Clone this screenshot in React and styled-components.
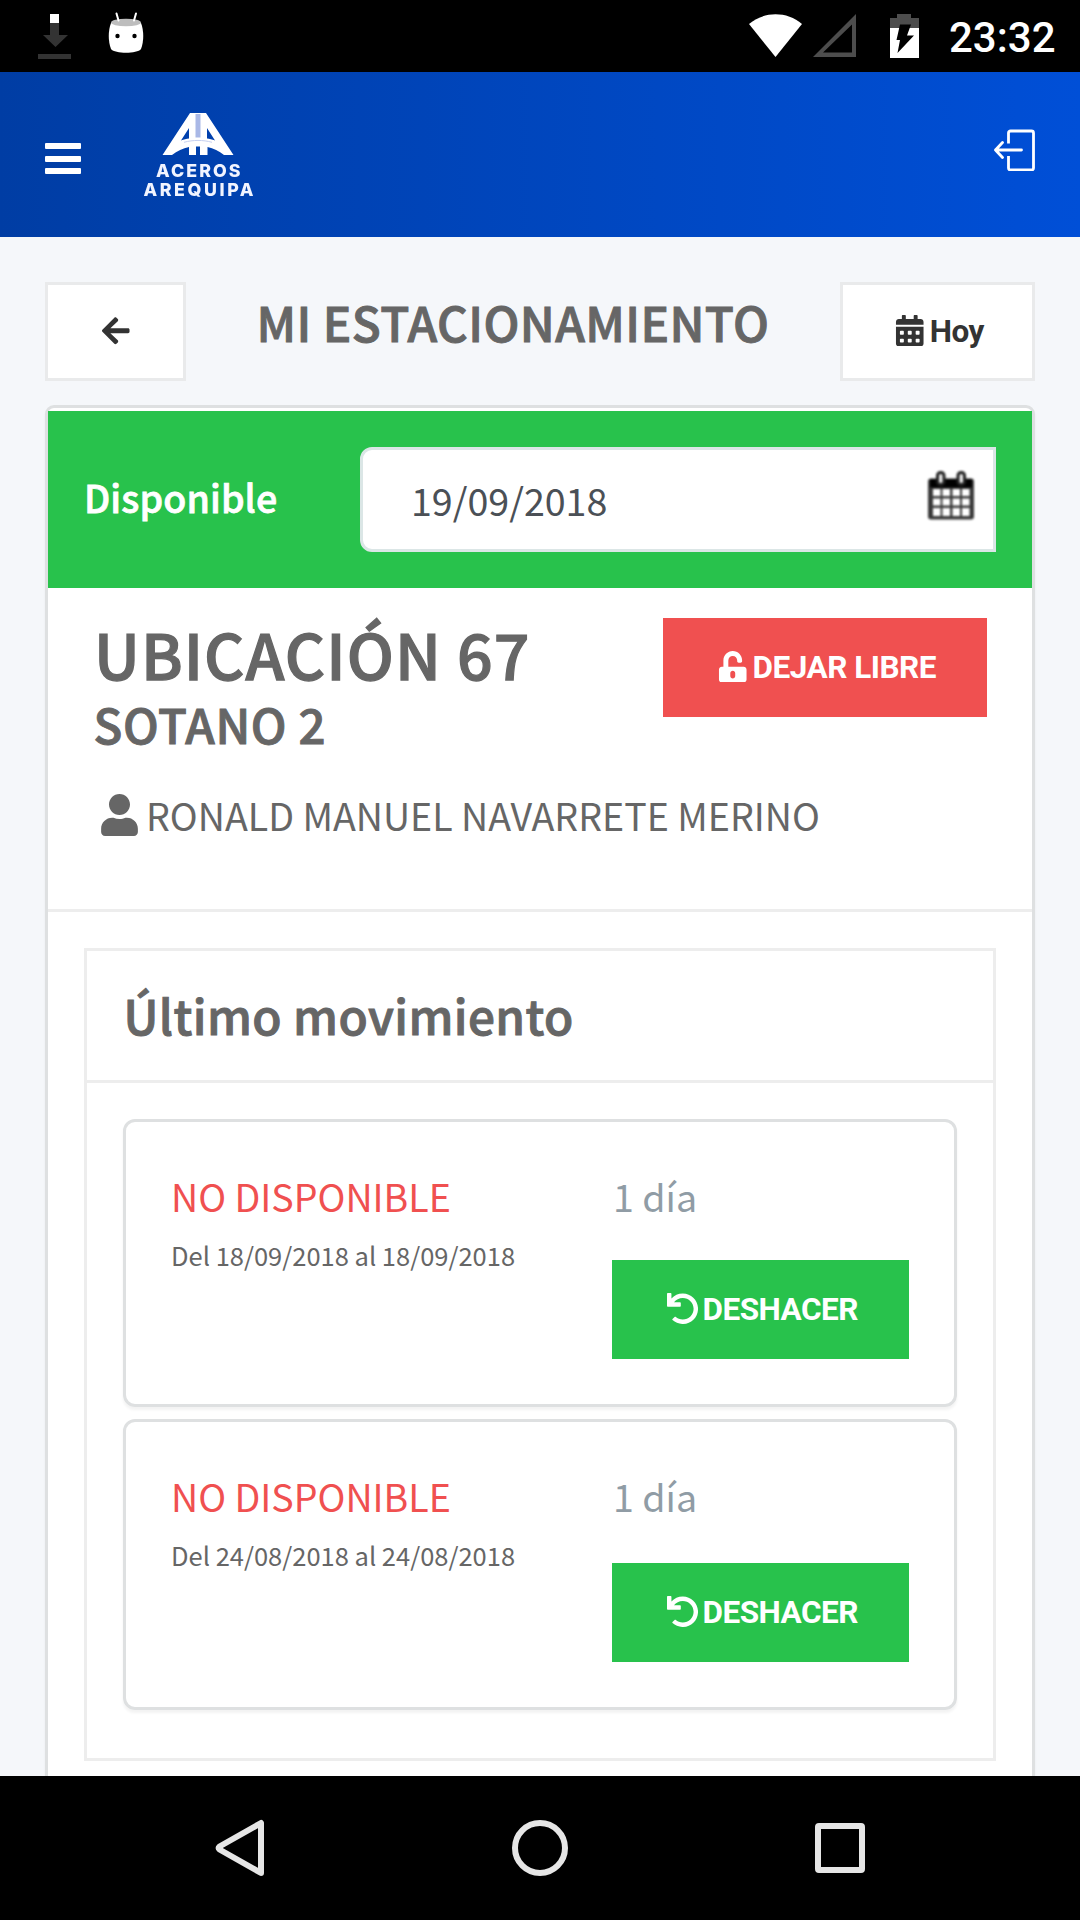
import React from 'react'
import styled, { createGlobalStyle } from 'styled-components';
import { FaArrowLeft, FaCalendarAlt, FaUnlockAlt, FaUndo, FaUser } from 'react-icons/fa';

const movements = [
    { id: 1, status: 'NO DISPONIBLE', range: 'Del 18/09/2018 al 18/09/2018', days: '1 día', gap: 33 },
    { id: 2, status: 'NO DISPONIBLE', range: 'Del 24/08/2018 al 24/08/2018', days: '1 día', gap: 36 },
]

const GlobalStyle = createGlobalStyle`
    *{
        margin: 0;
        padding: 0;
        box-sizing: border-box;
    }
    :root{
        --text-color: #666666;
        --green-color: #28c24c;
        --red-color: #f05050;
        --line-color: #ededed;
        --card-border: #dee0e1;
    }
    body{
        background: #f5f7fa;
        color: var(--text-color);
        font-family: 'Noto Sans CJK SC', 'Noto Sans', sans-serif;
        overflow: hidden;
    }
    /* semibold look, the font only goes from medium to bold */
    h1, h2, h3, strong{
        font-weight: 500;
        -webkit-text-stroke: .02em currentColor;
    }
    svg{
        display: block;
        flex-shrink: 0;
    }
`;

const StatusBar = () => {
    return (
        <StatusBarStyled>
            <svg width="150" height="72" viewBox="0 0 150 72">
                <path d="M50 23h9v12h9L55.500 47 43 35h7z" fill="#333" />
                <path d="M38 54h33v5H38z" fill="#333" />
                <path d="M50 14h9v9h-9z" fill="#fff" />
                <path d="M111 23c-3 8-3 18 0 26 4 5 26 5 30 0 3-8 3-18 0-26z" fill="#fff" />
                <ellipse cx="126" cy="22.500" rx="15" ry="3.800" fill="#bdbdbd" />
                <path d="M116.500 13.500l2 7M136 13.500l-2 7" stroke="#fff" strokeWidth="2" strokeLinecap="round" />
                <circle cx="117.500" cy="36" r="2.200" fill="#000" />
                <circle cx="134.500" cy="36" r="2.200" fill="#000" />
            </svg>
            <div className="system">
                <svg width="180" height="72" viewBox="745 0 180 72">
                    <path d="M749 24C764 11 787 11 802 24L775.500 57z" fill="#fff" />
                    <path d="M856 14v43h-43zM852 24.500L823 52.500h29z" fill="#4d4d4d" fillRule="evenodd" />
                    <path d="M890 18h7v-4h14v4h8v10h-29z" fill="#4d4d4d" />
                    <path d="M890 28h29v30h-29z" fill="#fff" />
                    <path d="M900 24.500h11l-4 11h7L897.500 53l2.500-13h-3.500z" fill="#000" />
                </svg>
                <span>23:32</span>
            </div>
        </StatusBarStyled>
    )
}

const Logo = () => {
    return (
        <LogoStyled width="120" height="100" viewBox="0 0 120 100">
            <path
                fillRule="evenodd"
                fill="#fff"
                d="M52 7h16l27.500 42H86c-5-4-10.500-6.500-16.500-8v8H62v-8.500h-4V49h-7v-8c-6 1.500-12 4-17 8h-9.500zM43 34.500c3-1.200 5.500-1.700 8-2V22zM69 22v10.500c2.500.3 5 .8 8 2z"
            />
            <path d="M57.500 8h5v23.500h-5z" fill="#a9b8e6" />
            <path d="M46 36.300c9-2.500 19-2.500 28 0" fill="none" stroke="#c6d0f0" strokeWidth="1" />
            <g fill="#f1f4ff" fontFamily="Inter, sans-serif" fontWeight="800" fontSize="17.800">
                <text x="18" y="71" textLength="84.500">ACEROS</text>
                <text x="5.500" y="90" textLength="110">AREQUIPA</text>
            </g>
        </LogoStyled>
    )
}

const Header = () => {
    return (
        <HeaderStyled>
            <div className="left">
                <div className="menu">
                    <span></span>
                    <span></span>
                    <span></span>
                </div>
                <Logo />
            </div>
            <svg className="exit" width="42" height="42" viewBox="0 0 42 42" fill="none" stroke="#fff" strokeWidth="2.800">
                <path d="M15.500 14.500V4a2 2 0 0 1 2-2h21a2 2 0 0 1 2 2v35a2 2 0 0 1-2 2h-21a2 2 0 0 1-2-2V27" />
                <path d="M28.500 21H2.500M9.500 13.500L2.500 21l7 7.500" strokeLinecap="round" strokeLinejoin="round" />
            </svg>
        </HeaderStyled>
    )
}

const DateField = ({ value }) => {
    return (
        <DateFieldStyled>
            <span>{value}</span>
            <svg width="46" height="49" viewBox="0 0 46 49">
                <rect x="0" y="7.500" width="46" height="41" rx="3" fill="#3a3a3a" />
                <path d="M2 8h42v8.500H2z" fill="#000" />
                <path
                    fill="#fff"
                    d="M5 18h7.500v7H5zM14.500 18H22v7h-7.500zM24.500 18H32v7h-7.500zM34 18h7.500v7H34zM5 27.500h7.500v7H5zM14.500 27.500H22v7h-7.500zM24.500 27.500H32v7h-7.500zM34 27.500h7.500v7H34zM5 37h7.500v8H5zM14.500 37H22v8h-7.500zM24.500 37H32v8h-7.500zM34 37h7.500v8H34z"
                />
                <rect x="9.500" y="1.500" width="6.500" height="12" rx="3" fill="#eee" stroke="#222" strokeWidth="3" />
                <rect x="30" y="1.500" width="6.500" height="12" rx="3" fill="#eee" stroke="#222" strokeWidth="3" />
            </svg>
        </DateFieldStyled>
    )
}

const Movement = ({ item }) => {
    return (
        <MovementStyled $gap={item.gap}>
            <div className="info">
                <p className="status">{item.status}</p>
                <p className="range">{item.range}</p>
            </div>
            <div className="actions">
                <p className="days">{item.days}</p>
                <Button $width={297} $pad={4} $bg="var(--green-color)">
                    <FaUndo />
                    DESHACER
                </Button>
            </div>
        </MovementStyled>
    )
}

const NavBar = () => {
    return (
        <NavBarStyled>
            <svg width="650" height="60" viewBox="215 1818 650 60" fill="none" stroke="#e6e6e6" strokeWidth="6" strokeLinejoin="round">
                <path d="M261 1823v50L219.500 1849.500q-1.500-1.500 0-3z" />
                <circle cx="540" cy="1848" r="25" />
                <rect x="818" y="1826" width="44" height="44" rx="1" />
            </svg>
        </NavBarStyled>
    )
}

const App = () => {
    return (
        <AppStyled>
            <GlobalStyle />
            <StatusBar />
            <Header />
            <Main>
                <PageHead>
                    <Button $width={141} $pad={0} $outline>
                        <FaArrowLeft />
                    </Button>
                    <h1>MI ESTACIONAMIENTO</h1>
                    <Button $width={195} $outline>
                        <FaCalendarAlt />
                        Hoy
                    </Button>
                </PageHead>
                <Card>
                    <Availability>
                        <strong>Disponible</strong>
                        <DateField value="19/09/2018" />
                    </Availability>
                    <Place>
                        <div className="place-top">
                            <div>
                                <h2>UBICACIÓN 67</h2>
                                <h3>SOTANO 2</h3>
                            </div>
                            <Button $width={324} $bg="var(--red-color)">
                                <FaUnlockAlt />
                                DEJAR LIBRE
                            </Button>
                        </div>
                        <div className="owner">
                            <FaUser />
                            <span>RONALD MANUEL NAVARRETE MERINO</span>
                        </div>
                    </Place>
                    <History>
                        <h3>Último movimiento</h3>
                        <div className="list">
                            {movements.map((item) => (
                                <Movement key={item.id} item={item} />
                            ))}
                        </div>
                    </History>
                </Card>
            </Main>
            <NavBar />
        </AppStyled>
    )
}

const AppStyled = styled.div`
    width: 1080px;
    height: 1920px;
    display: flex;
    flex-direction: column;
    overflow: hidden;
`;

const StatusBarStyled = styled.div`
    height: 72px;
    flex-shrink: 0;
    background: #000;
    display: flex;
    justify-content: space-between;
    .system{
        display: flex;
        padding-right: 25px;
        span{
            width: 106px;
            color: #fff;
            font-family: Roboto, sans-serif;
            font-weight: 500;
            font-size: 42px;
            line-height: 75px;
            margin-left: 24px;
            white-space: nowrap;
        }
    }
`;

const LogoStyled = styled.svg`
    filter: blur(.5px);
`;

const HeaderStyled = styled.header`
    height: 165px;
    flex-shrink: 0;
    padding: 0 45px;
    display: flex;
    justify-content: space-between;
    background: linear-gradient(to right, #003da4, #004fd7);
    .left{
        display: flex;
        gap: 57px;
        padding-top: 34px;
    }
    .menu{
        display: flex;
        flex-direction: column;
        gap: 6.5px;
        padding-top: 37px;
        span{
            width: 36px;
            height: 6px;
            border-radius: 1px;
            background: #fff;
        }
    }
    .exit{
        margin-top: 57px;
    }
`;

const Main = styled.main`
    flex: 1;
    min-height: 0;
    overflow: hidden;
    padding: 45px 45px 0;
    background: #f5f7fa;
`;

const Button = styled.button`
    width: ${(props) => props.$width}px;
    height: 99px;
    flex-shrink: 0;
    display: flex;
    align-items: center;
    justify-content: center;
    gap: 4px;
    border: ${(props) => (props.$outline ? '3px solid #e9eaeb' : 'none')};
    background: ${(props) => props.$bg || '#fff'};
    color: ${(props) => (props.$outline ? '#333' : '#fff')};
    padding-left: ${(props) => props.$pad ?? 3}px;
    font-family: Roboto, sans-serif;
    font-weight: 700;
    font-size: 31.5px;
    line-height: 42px;
    letter-spacing: -.5px;
    white-space: nowrap;
    svg{
        margin-bottom: 2px;
    }
`;

const PageHead = styled.div`
    display: flex;
    margin-bottom: 24px;
    h1{
        flex: 1;
        margin-top: 11px;
        text-align: center;
        font-size: 47.7px;
        line-height: 58px;
        letter-spacing: .4px;
        white-space: nowrap;
    }
`;

const Card = styled.section`
    height: 1500px;
    padding-top: 3px;
    background: #fff;
    border: 3px solid var(--card-border);
    border-radius: 9px;
    box-shadow: 0 3px 3px rgba(0, 0, 0, .05);
`;

const Availability = styled.div`
    height: 177px;
    padding: 0 36px;
    display: flex;
    align-items: center;
    justify-content: space-between;
    background: var(--green-color);
    strong{
        margin-bottom: 5px;
        color: #fff;
        font-size: 37.6px;
        line-height: 56px;
        letter-spacing: .1px;
    }
`;

const DateFieldStyled = styled.div`
    width: 636px;
    height: 105px;
    padding: 0 19px 0 48px;
    display: flex;
    align-items: center;
    justify-content: space-between;
    background: #fff;
    border: 3px solid #dbe6e6;
    border-radius: 12px 0 0 12px;
    color: #4b5056;
    font-size: 37.6px;
    line-height: 56px;
    svg{
        margin-bottom: 9px;
        filter: blur(.8px);
    }
`;

const Place = styled.div`
    height: 324px;
    padding: 30px 45px 0;
    border-bottom: 3px solid var(--line-color);
    .place-top{
        display: flex;
        justify-content: space-between;
    }
    h2{
        padding-left: 1px;
        font-size: 62.5px;
        line-height: 70px;
        letter-spacing: 1.1px;
    }
    h3{
        padding-left: .5px;
        margin-top: 1px;
        font-size: 47.4px;
        line-height: 70px;
        letter-spacing: .6px;
    }
    .owner{
        display: flex;
        align-items: center;
        gap: 8px;
        height: 42px;
        margin-top: 34px;
        padding-left: 8px;
        font-size: 37.6px;
        white-space: nowrap;
        svg{
            font-size: 42px;
            width: 37px;
            margin-top: 2px;
        }
    }
`;

const History = styled.div`
    margin: 36px;
    border: 3px solid var(--line-color);
    h3{
        height: 132px;
        padding: 0 36.5px;
        border-bottom: 3px solid var(--line-color);
        font-size: 47.7px;
        line-height: 128px;
        letter-spacing: .4px;
    }
    .list{
        padding: 36px 36px 48px;
        display: flex;
        flex-direction: column;
        gap: 12px;
    }
`;

const MovementStyled = styled.div`
    display: flex;
    padding: 42px 45px 45px;
    border: 3px solid var(--card-border);
    border-radius: 12px;
    box-shadow: 0 3px 3px rgba(0, 0, 0, .05);
    .info{
        width: 441px;
    }
    .status, .days{
        font-size: 37.6px;
        line-height: 63px;
    }
    .status{
        color: var(--red-color);
    }
    .days{
        color: #909ca5;
        padding-left: 1px;
        margin-bottom: ${(props) => props.$gap}px;
    }
    .range{
        font-size: 25.5px;
        line-height: 55px;
    }
`;

const NavBarStyled = styled.div`
    height: 144px;
    flex-shrink: 0;
    background: #000;
    display: flex;
    align-items: center;
    justify-content: center;
`;

export default App
